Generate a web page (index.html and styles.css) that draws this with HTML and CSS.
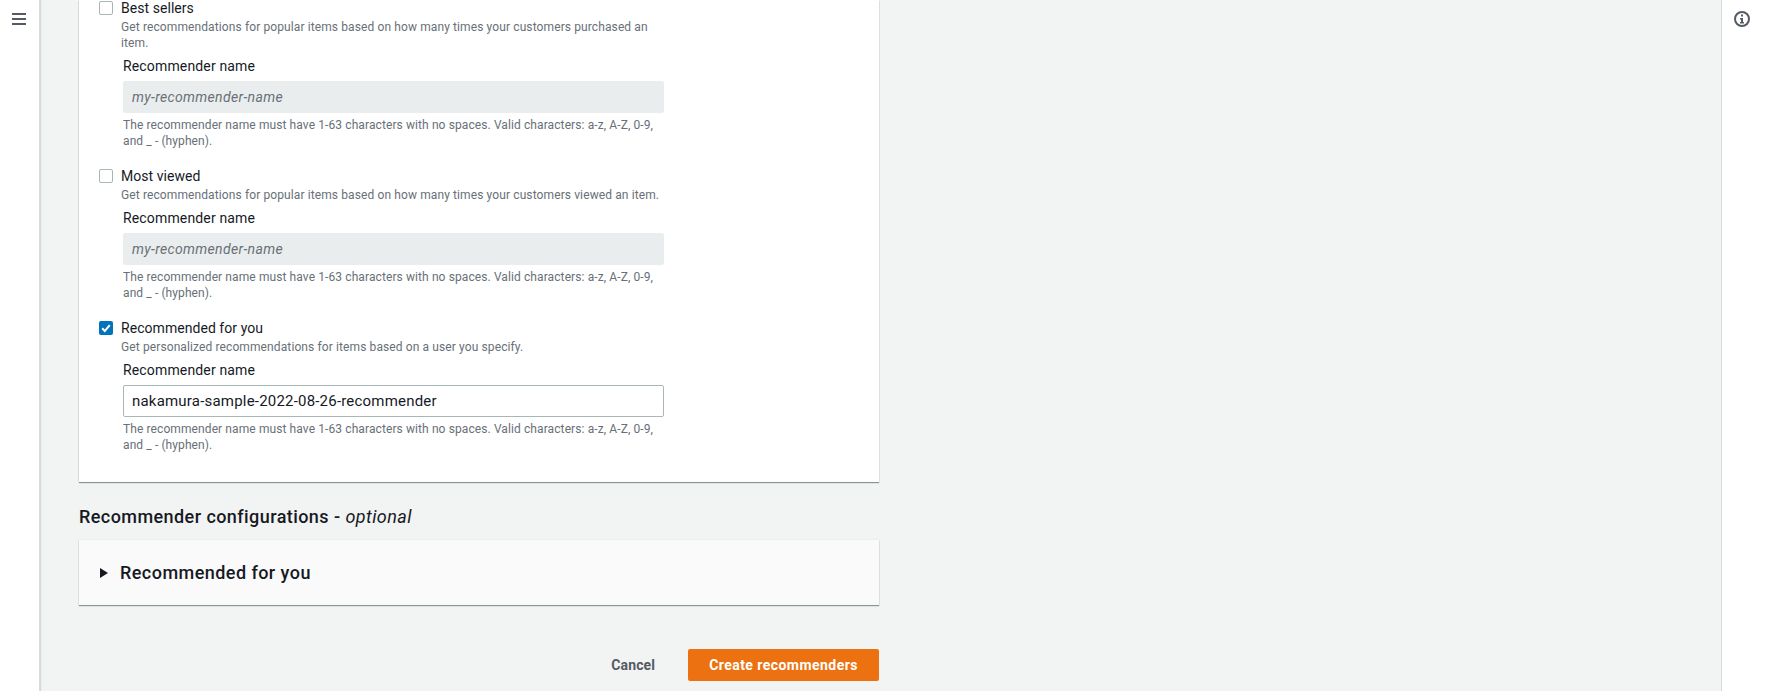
FILE: index.html
```html
<!DOCTYPE html>
<html lang="en">
<head>
    <meta charset="UTF-8">
    <meta name="viewport" content="width=device-width, initial-scale=1.0">
    <title>Create recommenders</title>
    <link rel="stylesheet" href="styles.css">
</head>
<body>
    <div class="page">
        <nav class="side-nav">
            <button class="icon-button" aria-label="Open navigation">
                <svg width="14" height="12" viewBox="0 0 14 12"><path d="M0 0h14v2H0zM0 5h14v2H0zM0 10h14v2H0z" fill="#545b64"/></svg>
            </button>
        </nav>

        <main class="content">
            <form class="form-column">
                <section class="card">
                    <div class="option">
                        <label class="option-label"><span class="checkbox"></span>Best sellers</label>
                        <p class="option-desc">Get recommendations for popular items based on how many times your customers purchased an item.</p>
                        <div class="name-field">
                            <label class="field-label">Recommender name</label>
                            <input class="text-input" type="text" placeholder="my-recommender-name" disabled>
                            <p class="hint">The recommender name must have 1-63 characters with no spaces. Valid characters: a-z, A-Z, 0-9, and _ - (hyphen).</p>
                        </div>
                    </div>

                    <div class="option">
                        <label class="option-label"><span class="checkbox"></span>Most viewed</label>
                        <p class="option-desc">Get recommendations for popular items based on how many times your customers viewed an item.</p>
                        <div class="name-field">
                            <label class="field-label">Recommender name</label>
                            <input class="text-input" type="text" placeholder="my-recommender-name" disabled>
                            <p class="hint">The recommender name must have 1-63 characters with no spaces. Valid characters: a-z, A-Z, 0-9, and _ - (hyphen).</p>
                        </div>
                    </div>

                    <div class="option">
                        <label class="option-label">
                            <span class="checkbox checked">
                                <svg width="14" height="14" viewBox="0 0 14 14"><path d="M3.2 7.2l2.6 2.7 5-5.8" fill="none" stroke="#fff" stroke-width="2"/></svg>
                            </span>Recommended for you
                        </label>
                        <p class="option-desc">Get personalized recommendations for items based on a user you specify.</p>
                        <div class="name-field">
                            <label class="field-label">Recommender name</label>
                            <input class="text-input" type="text" value="nakamura-sample-2022-08-26-recommender">
                            <p class="hint">The recommender name must have 1-63 characters with no spaces. Valid characters: a-z, A-Z, 0-9, and _ - (hyphen).</p>
                        </div>
                    </div>
                </section>

                <h2 class="section-title">Recommender configurations - <em>optional</em></h2>

                <section class="expander">
                    <svg class="caret" width="8" height="10" viewBox="0 0 8 10"><path d="M0 0l8 5-8 5z" fill="#16191f"/></svg>
                    <h3>Recommended for you</h3>
                </section>

                <div class="actions">
                    <button type="button" class="btn-cancel">Cancel</button>
                    <button type="button" class="btn-primary">Create recommenders</button>
                </div>
            </form>
        </main>

        <aside class="tools-panel">
            <button class="icon-button" aria-label="Open help panel">
                <svg width="16" height="16" viewBox="0 0 16 16">
                    <circle cx="8" cy="8" r="7" fill="none" stroke="#545b64" stroke-width="2"/>
                    <path d="M7 3.5h2v2H7zM6 7h3v4h1v1.5H6V11h1V8.5H6z" fill="#545b64"/>
                </svg>
            </button>
        </aside>
    </div>
</body>
</html>
```

FILE: styles.css
```css
* {
    box-sizing: border-box;
}

html, body {
    height: 100%;
}

body {
    margin: 0;
    background-color: #f2f3f3;
    color: #16191f;
    font-family: Roboto, "Liberation Sans", sans-serif;
    font-size: 14px;
    overflow: hidden;
}

p, h2, h3 {
    margin: 0;
}

.page {
    display: flex;
    height: 100%;
}

.side-nav {
    flex: 0 0 40px;
    background-color: #fff;
    border-right: 1px solid #d5dbdb;
    box-shadow: 1px 0 1px #d5dbdb;
}

.tools-panel {
    flex: 0 0 44px;
    background-color: #fff;
    border-left: 1px solid #d5dbdb;
}

.icon-button {
    display: block;
    padding: 0;
    border: 0;
    background: none;
    line-height: 0;
}

.side-nav .icon-button {
    margin: 13px 0 0 12px;
}

.tools-panel .icon-button {
    margin: 11px 0 0 12px;
}

.content {
    flex: 1;
    padding-left: 39px;
}

.form-column {
    width: 800px;
}

.card {
    background-color: #fff;
    padding: 0 20px 29px;
    box-shadow: 0 1px 1px #879596, 1px 0 1px -1px #d5dbdb, -1px 0 1px -1px #aab7b8;
}

.option + .option {
    margin-top: 19px;
}

.option-label {
    display: flex;
    align-items: center;
    line-height: 16px;
    letter-spacing: 0.05px;
}

.checkbox {
    flex: none;
    width: 14px;
    height: 14px;
    margin-right: 8px;
    border: 1px solid #aab7b8;
    border-radius: 2px;
    background-color: #fff;
}

.checkbox.checked {
    border: 0;
    background-color: #0073bb;
}

.checkbox svg {
    display: block;
}

.option-desc {
    width: 545px;
    margin: 3px 0 0 22px;
    font-size: 12px;
    line-height: 16px;
    letter-spacing: 0.11px;
    color: #687078;
}

.name-field {
    margin: 4px 0 0 24px;
    width: 541px;
}

.field-label {
    display: block;
    line-height: 22px;
    letter-spacing: 0.15px;
}

.text-input {
    display: block;
    width: 100%;
    height: 32px;
    margin-top: 4px;
    padding: 0 8px;
    border: 1px solid #aab7b8;
    border-radius: 2px;
    background-color: #fff;
    color: #16191f;
    font-family: inherit;
    font-size: 15px;
    letter-spacing: 0.2px;
}

.text-input:disabled {
    border-color: #eaeded;
    background-color: #eaeded;
    font-size: 14px;
    letter-spacing: 0.35px;
}

.text-input::placeholder {
    color: #687078;
    font-style: italic;
    opacity: 1;
}

.hint {
    margin-top: 4px;
    font-size: 12px;
    line-height: 16px;
    letter-spacing: 0.1px;
    color: #687078;
}

.section-title {
    margin-top: 24px;
    font-size: 18px;
    font-weight: 500;
    line-height: 22px;
    letter-spacing: 0.43px;
}

.section-title em {
    font-weight: 400;
}

.expander {
    display: flex;
    align-items: center;
    height: 65px;
    margin-top: 12px;
    padding-left: 21px;
    background-color: #fafafa;
    box-shadow: 0 1px 1px #879596, 0 0 1px #d5dbdb;
}

.caret {
    margin-right: 12px;
}

.expander h3 {
    font-size: 18px;
    font-weight: 500;
    letter-spacing: 0.45px;
}

.actions {
    display: flex;
    justify-content: flex-end;
    align-items: center;
    margin-top: 44px;
}

.actions button {
    height: 32px;
    border: 0;
    border-radius: 2px;
    font-family: inherit;
    font-size: 14px;
    font-weight: 700;
}

.btn-cancel {
    margin-right: 13px;
    padding: 0 20px;
    background: none;
    color: #545b64;
    letter-spacing: 0.1px;
}

.btn-primary {
    width: 191px;
    background-color: #ec7211;
    color: #fff;
    letter-spacing: 0.45px;
}
```
